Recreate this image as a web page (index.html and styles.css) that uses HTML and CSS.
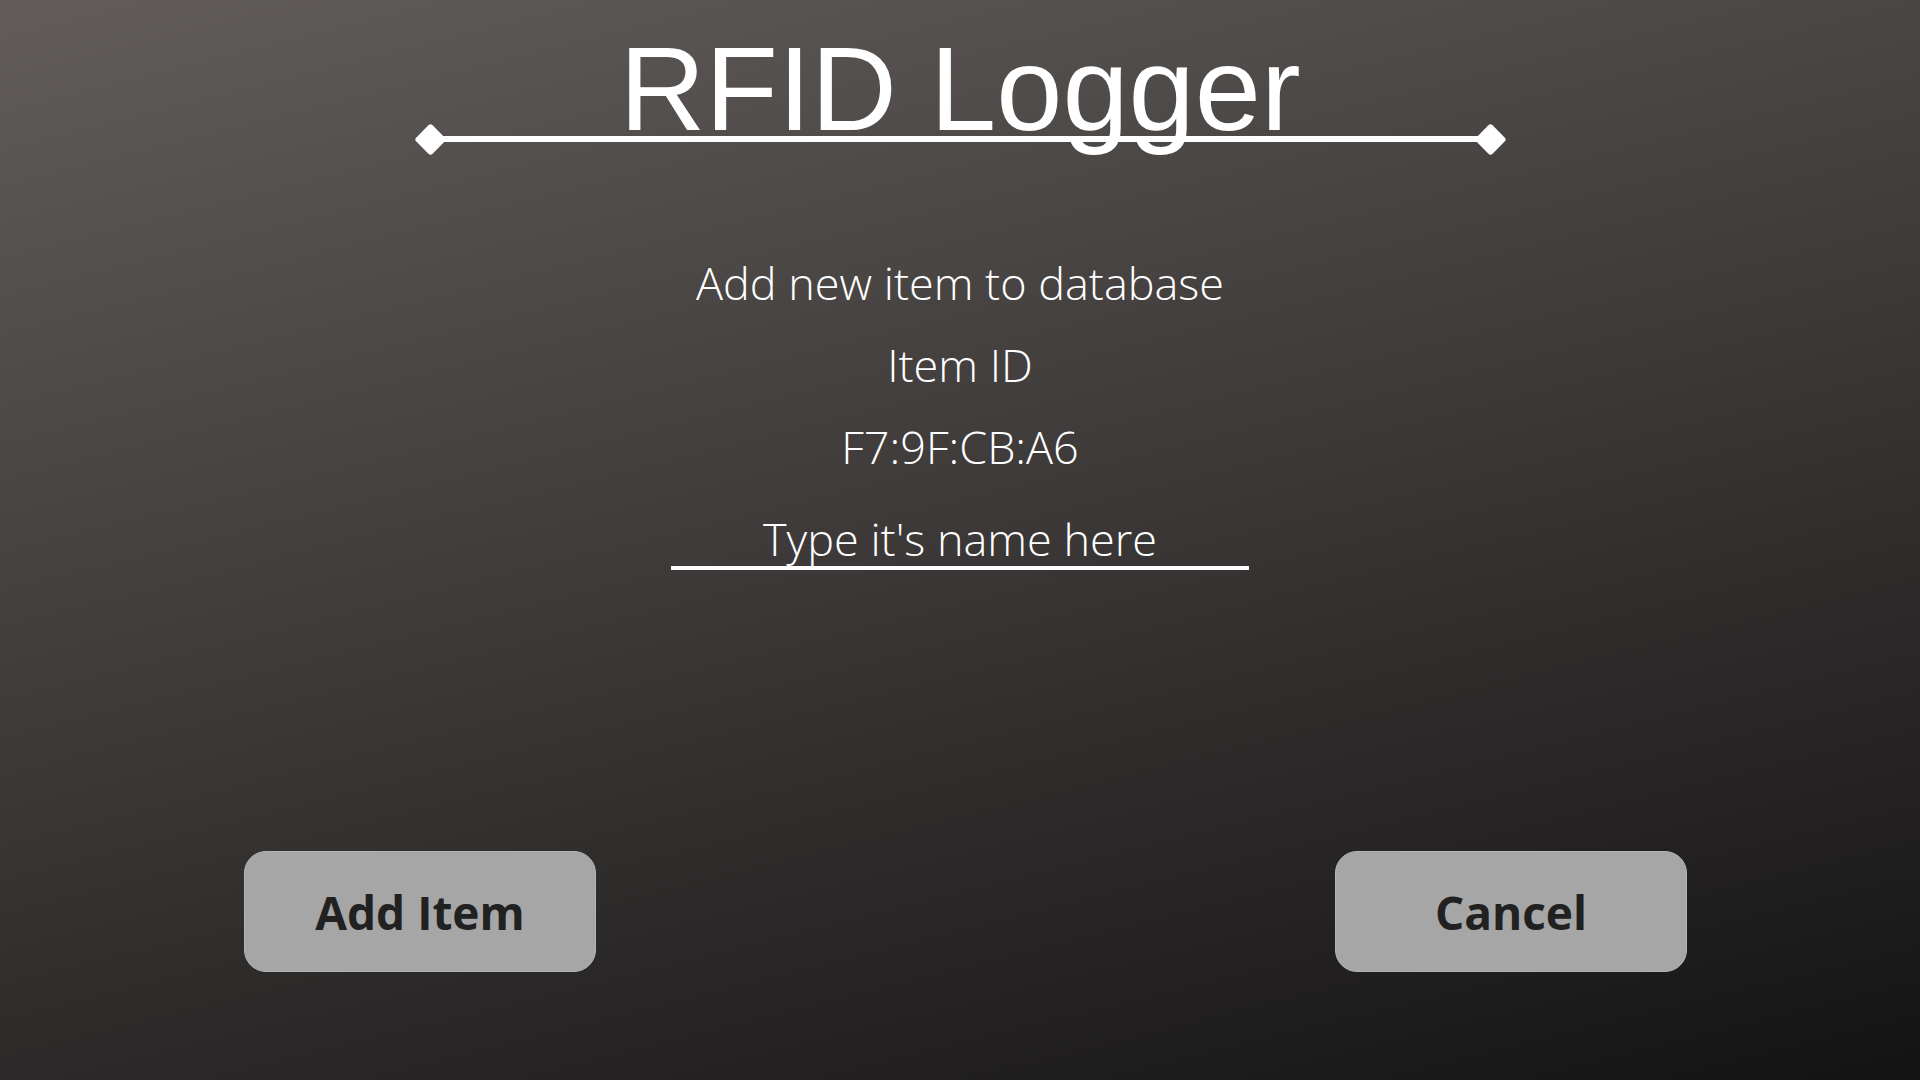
FILE: index.html
```html
<!DOCTYPE html>
<html lang="en">
<head>
<meta charset="utf-8">
<title>RFID Logger</title>
<link rel="stylesheet" href="styles.css">
</head>
<body>
<main class="screen">
  <header class="header">
    <h1 class="title">RFID Logger</h1>
    <div class="rule">
      <span class="diamond"></span>
      <span class="bar"></span>
      <span class="diamond"></span>
    </div>
  </header>
  <section class="form">
    <p class="line">Add new item to database</p>
    <p class="line">Item ID</p>
    <p class="line">F7:9F:CB:A6</p>
    <input class="name-input" type="text" placeholder="Type it's name here">
  </section>
  <div class="actions">
    <button class="btn">Add Item</button>
    <button class="btn">Cancel</button>
  </div>
</main>
</body>
</html>
```
FILE: styles.css
```css
html, body {
  margin: 0;
  padding: 0;
  width: 1920px;
  height: 1080px;
  overflow: hidden;
}
body {
  background: linear-gradient(166deg, #625d5b 0%, #141313 100%);
  color: #ffffff;
  font-family: "Open Sans", "Liberation Sans", sans-serif;
}
.screen {
  display: flex;
  flex-direction: column;
  align-items: center;
  height: 1080px;
}
.header {
  display: flex;
  flex-direction: column;
  align-items: center;
  padding-top: 29px;
}
.title {
  margin: 0;
  font-family: "Liberation Sans", Arial, sans-serif;
  font-weight: 400;
  font-size: 119px;
  line-height: 119px;
  color: #ffffff;
}
.rule {
  width: 1083px;
  height: 32px;
  margin-top: -25px;
  display: flex;
  align-items: center;
}
.bar {
  flex: 1;
  height: 6px;
  background: #ffffff;
  margin: 0 -6px;
}
.diamond {
  width: 23px;
  height: 23px;
  background: #ffffff;
  border-radius: 3px;
  transform: rotate(45deg);
  flex: none;
}
.form {
  display: flex;
  flex-direction: column;
  align-items: center;
  margin-top: 87px;
}
.line {
  margin: 0;
  font-weight: 300;
  font-size: 45px;
  line-height: 82px;
  white-space: nowrap;
}
.name-input {
  margin-top: 23px;
  width: 578px;
  height: 55px;
  box-sizing: content-box;
  padding: 0;
  border: none;
  border-bottom: 4px solid #ffffff;
  background: transparent;
  color: #ffffff;
  font-family: "Open Sans", sans-serif;
  font-weight: 300;
  font-size: 45px;
  text-align: center;
  outline: none;
}
.name-input::placeholder {
  color: #ffffff;
  opacity: 1;
}
.actions {
  align-self: stretch;
  display: flex;
  justify-content: space-between;
  padding: 0 233px 0 244px;
  margin-top: 281px;
}
.btn {
  width: 352px;
  height: 121px;
  box-sizing: border-box;
  background: #a6a6a6;
  border: 1px solid #b3b3b3;
  border-radius: 22px;
  color: #212121;
  font-family: "Open Sans", sans-serif;
  font-weight: 700;
  font-size: 46px;
  padding: 0;
  cursor: pointer;
}
```
